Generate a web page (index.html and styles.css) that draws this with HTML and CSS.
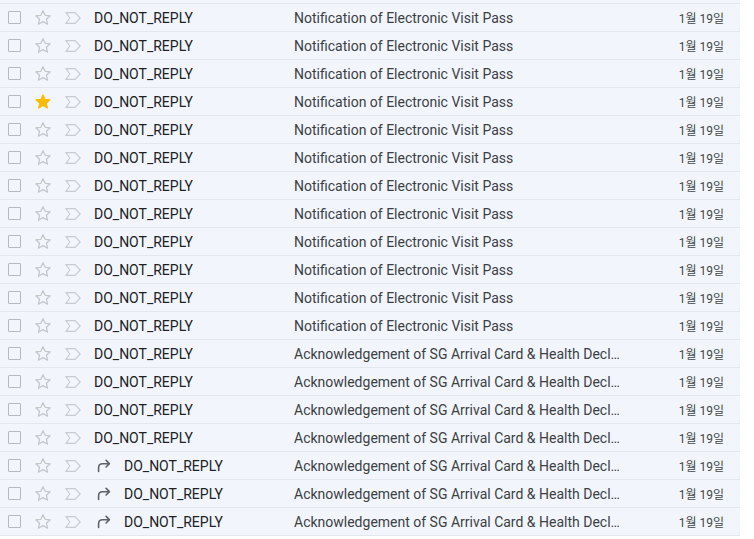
FILE: index.html
```html
<!DOCTYPE html>
<html lang="ko">
<head>
<meta charset="utf-8">
<link rel="stylesheet" href="styles.css">
</head>
<body>
<div class="list" id="list"></div>
<svg width="0" height="0" class="defs">
  <defs>
    <symbol id="star" viewBox="0 0 24 24"><path d="M12 3.2l2.6 5.6 6.1.6-4.6 4.1 1.3 6-5.4-3.1-5.4 3.1 1.3-6-4.6-4.1 6.1-.6z" fill="none" stroke="currentColor" stroke-width="1.5" stroke-linejoin="round"/></symbol>
    <symbol id="starf" viewBox="0 0 24 24"><path d="M12 3.2l2.6 5.6 6.1.6-4.6 4.1 1.3 6-5.4-3.1-5.4 3.1 1.3-6-4.6-4.1 6.1-.6z" fill="currentColor" stroke="currentColor" stroke-width="1.2" stroke-linejoin="round"/></symbol>
    <symbol id="imp" viewBox="0 0 24 24"><path d="M3.5 5.5h11l6 6.5-6 6.5h-11l4.8-6.5z" fill="none" stroke="currentColor" stroke-width="1.4" stroke-linejoin="round"/></symbol>
    <symbol id="fwd" viewBox="0 0 24 24"><path d="M5.5 18.5v-4.5c0-2.8 2-4.8 4.8-4.8h8.2M14.5 5.2l4 4-4 4" fill="none" stroke="currentColor" stroke-width="1.9" stroke-linecap="round" stroke-linejoin="round"/></symbol>
  </defs>
</svg>
<script src="app.js"></script>
</body>
</html>
```
FILE: app.js
```js
const N = 'Notification of Electronic Visit Pass';
const A = 'Acknowledgement of SG Arrival Card & Health Declaration';
const rows = [];
for (let i = 0; i < 12; i++) rows.push({ s: N, star: i === 3, fwd: false });
for (let i = 0; i < 4; i++) rows.push({ s: A, star: false, fwd: false });
for (let i = 0; i < 3; i++) rows.push({ s: A, star: false, fwd: true });
const list = document.getElementById('list');
list.innerHTML = rows.map(r => `
<div class="row">
  <span class="cb"></span>
  <svg class="ic star ${r.star ? 'on' : ''}"><use href="#${r.star ? 'starf' : 'star'}"/></svg>
  <svg class="ic imp"><use href="#imp"/></svg>
  <div class="sender">${r.fwd ? '<svg class="fwd"><use href="#fwd"/></svg>' : ''}<span>DO_NOT_REPLY</span></div>
  <div class="subject">${r.s.replace('&', '&amp;')}</div>
  <div class="date">1월 19일</div>
</div>`).join('');
```
FILE: styles.css
```css
html, body { margin: 0; padding: 0; background: #fff; }
body { font-family: Roboto, "Noto Sans CJK KR", sans-serif; }
.defs { position: absolute; }
.list {
  width: 740px;
  background: #f2f6fc;
  padding-top: 3px;
}
.row {
  display: flex;
  align-items: center;
  height: 27px;
  border-top: 1px solid #e1e6ef;
  font-size: 14px;
  color: #202124;
  background: #f2f6fc;
}
.row:last-child { border-bottom: 1px solid #e1e6ef; }
.cb {
  box-sizing: border-box;
  width: 13px;
  height: 13px;
  border: 1.5px solid #b8b9bb;
  border-radius: 1px;
  margin-left: 8px;
  flex: none;
}
.ic { flex: none; width: 20px; height: 20px; }
.star { color: #c4c6c9; margin-left: 12px; }
.star.on { color: #fbbc04; }
.imp { color: #c9cbce; margin-left: 10px; }
.sender {
  display: flex;
  align-items: center;
  width: 200px;
  margin-left: 11px;
  flex: none;
}
.fwd { width: 20px; height: 20px; color: #5f6368; margin-left: 0; margin-right: 10px; flex: none; }
.subject {
  width: 331px;
  white-space: nowrap;
  overflow: hidden;
  text-overflow: ellipsis;
  color: #3c4043;
  flex: none;
}
.date {
  flex: 1;
  text-align: right;
  padding-right: 16px;
  font-size: 12px;
  color: #444746;
}
```
